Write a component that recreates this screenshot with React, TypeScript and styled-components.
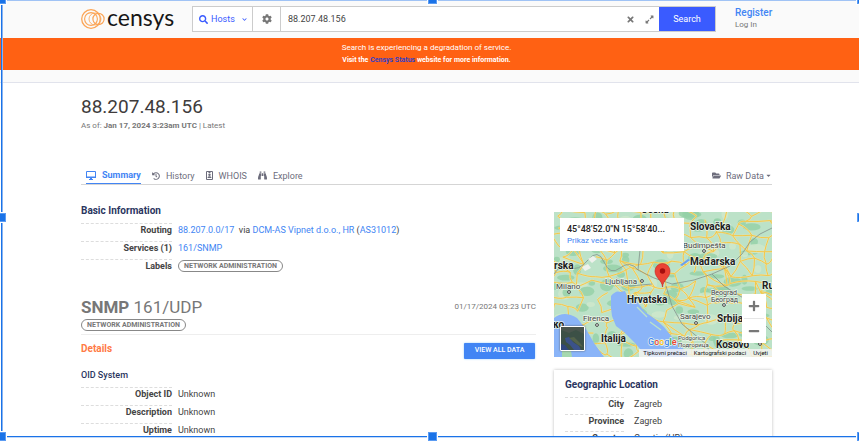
import React from "react";
import styled, { createGlobalStyle, css } from "styled-components";
import {
  FaSearch,
  FaChevronDown,
  FaCog,
  FaTimes,
  FaExpandAlt,
  FaHistory,
  FaBinoculars,
  FaFolderOpen,
  FaCaretDown,
  FaPlus,
  FaMinus,
} from "react-icons/fa";

const color = {
  ink: "#444444",
  muted: "#777777",
  navy: "#2a3560",
  link: "#4285f4",
  brand: "#3a5bff",
  orange: "#ff6113",
  line: "#cccccc",
  frame: "#1a73e8",
};

const GlobalStyle = createGlobalStyle`
  * { box-sizing: border-box; }
  body {
    margin: 0;
    background: #ffffff;
    color: ${color.ink};
    font-family: Roboto, "Liberation Sans", sans-serif;
    font-size: 9px;
    line-height: 12px;
  }
  h1, h2, h3, p, dl, dd, dt { margin: 0; }
  a { color: ${color.link}; text-decoration: none; }
  button, input, select { font: inherit; color: inherit; }
  svg { flex: none; }
`;

const Screen = styled.div`
  position: relative;
  height: 100vh;
  padding-bottom: 8px;
  overflow: hidden;
`;

const Page = styled.div`
  height: 100%;
  overflow: hidden;
`;

const Container = styled.div`
  padding: 0 87px 0 81px;
`;

/* Header */

const Header = styled.header`
  background: #fafafa;
  border-bottom: 1px solid #e1e3ec;
  padding-bottom: 12px;
`;

const TopBar = styled(Container)`
  display: flex;
  align-items: center;
  height: 38px;
`;

const Brand = styled.a`
  display: flex;
  align-items: center;
  flex: none;
  width: 111px;
  gap: 2px;
  color: #161616;
`;

const BrandName = styled.span`
  padding-bottom: 4px;
  font: 400 23px/24px Lato, sans-serif;
`;

const SearchForm = styled.form`
  display: flex;
  flex: 1;
  height: 26px;
  border: 1px solid ${color.line};
  background: #ffffff;
`;

const HostsPicker = styled.label`
  display: flex;
  align-items: center;
  gap: 3px;
  width: 60px;
  padding-left: 6px;
  border-right: 1px solid ${color.line};
  color: ${color.brand};
`;

const HostsSelect = styled.select`
  width: 28px;
  padding: 0;
  border: 0;
  appearance: none;
  background: transparent;
  font-size: 9px;
`;

const IconButton = styled.button<{ $width: number; $divided?: boolean }>`
  display: flex;
  align-items: center;
  justify-content: center;
  width: ${(p) => p.$width}px;
  padding: 0;
  border: 0;
  ${(p) => p.$divided && css`border-right: 1px solid ${color.line};`}
  background: transparent;
  color: ${color.muted};
`;

const SearchInput = styled.input`
  flex: 1;
  min-width: 0;
  padding: 0 7px;
  border: 0;
  background: transparent;
  font-size: 9px;
`;

const SearchButton = styled.button`
  width: 56px;
  border: 0;
  background: ${color.brand};
  color: #ffffff;
  font-size: 9px;
`;

const Account = styled.nav`
  display: flex;
  flex-direction: column;
  flex: none;
  width: 56px;
  padding-left: 19px;
  white-space: nowrap;
`;

const RegisterLink = styled.a`
  font-size: 10px;
  font-weight: 500;
`;

const LoginLink = styled.a`
  color: ${color.muted};
  font-size: 8px;
`;

const Banner = styled.div`
  padding: 3px 0;
  background: ${color.orange};
  color: #ffffff;
  text-align: center;
  line-height: 13px;
`;

const BannerTitle = styled.p`
  font-size: 8px;
`;

const BannerNote = styled.p`
  font-size: 7px;
  font-weight: 700;
  a { color: #3340c4; }
`;

/* Host heading and tabs */

const HostName = styled.h1`
  padding-top: 10px;
  color: #403c3c;
  font-size: 19px;
  font-weight: 400;
  line-height: 27px;
`;

const AsOf = styled.p`
  color: ${color.muted};
  font-size: 8px;
`;

const TabBar = styled.nav`
  display: flex;
  margin-top: 35px;
  border-bottom: 1px solid #d5d5d5;
  color: #6d6d7c;
`;

const Tab = styled.a<{ $active?: boolean }>`
  display: flex;
  align-items: center;
  gap: 6px;
  height: 17px;
  margin: 0 6px 0 5px;
  color: #6d6d7c;
  ${(p) =>
    p.$active &&
    css`
      border-bottom: 1px solid ${color.link};
      color: ${color.link};
      font-weight: 700;
    `}
`;

const RawData = styled.button`
  display: flex;
  align-items: center;
  gap: 1px;
  margin-left: auto;
  padding: 0;
  border: 0;
  background: transparent;
  svg:first-child { margin-right: 4px; }
`;

/* Body */

const Columns = styled.main`
  display: grid;
  grid-template-columns: minmax(0, 1fr) 218px;
  gap: 18px;
  padding-top: 19px;
`;

const SectionTitle = styled.h2`
  color: ${color.navy};
  font-size: 10px;
  font-weight: 700;
  line-height: 14px;
`;

const SubTitle = styled(SectionTitle)`
  margin-top: 9px;
  font-size: 9px;
  font-weight: 500;
`;

const Facts = styled.dl<{ $label: number; $gap: number; $row: number }>`
  display: grid;
  grid-template-columns: ${(p) => p.$label}px minmax(0, 1fr);
  column-gap: ${(p) => p.$gap}px;
  grid-auto-rows: ${(p) => p.$row}px;
  margin-top: 5px;
`;

const FactName = styled.dt`
  border-top: 1px dashed #dddddd;
  text-align: right;
  font-weight: 700;
`;

const FactValue = styled.dd`
  padding-top: 1px;
  white-space: nowrap;
`;

const Label = styled.span`
  display: inline-block;
  padding: 0 5px;
  border: 1px solid #888888;
  border-radius: 6px;
  color: ${color.muted};
  font-size: 7px;
  font-weight: 700;
  line-height: 10px;
  vertical-align: top;
`;

const ServiceHead = styled.div`
  display: flex;
  align-items: center;
  justify-content: space-between;
  margin-top: 19px;
`;

const ServiceTitle = styled.h2`
  color: ${color.muted};
  font-size: 17px;
  font-weight: 400;
  line-height: 22px;
`;

const Stamp = styled.time`
  color: ${color.muted};
  font-size: 8px;
`;

const ServiceLabels = styled.div`
  height: 17px;
  padding-top: 1px;
  border-bottom: 1px solid #eeeeee;
`;

const DetailsRow = styled.div`
  display: flex;
  align-items: center;
  justify-content: space-between;
  padding: 8px 1px 0 0;
`;

const DetailsTitle = styled.h3`
  padding-bottom: 4px;
  color: #ff7a45;
  font-size: 10px;
  font-weight: 700;
`;

const DataButton = styled.button`
  width: 71px;
  height: 16px;
  padding: 0 0 2px;
  border: 0;
  border-radius: 1px;
  background: ${color.link};
  box-shadow: 0 0 2px #8ec8fb;
  color: #ffffff;
  font-size: 7px;
  font-weight: 500;
`;

/* Map */

const MapBox = styled.section`
  position: relative;
  height: 145px;
  margin-top: 8px;
  overflow: hidden;
`;

const MapDrawing = styled.svg`
  display: block;
  width: 100%;
  height: 100%;
`;

const PlaceCard = styled.div`
  position: absolute;
  top: 6px;
  left: 6px;
  width: 124px;
  height: 33px;
  padding: 6px 7px;
  background: #ffffff;
  line-height: 11px;
  white-space: nowrap;
`;

const PlaceName = styled.p`
  color: #222222;
  font-size: 9px;
  font-weight: 500;
`;

const PlaceLink = styled.a`
  display: block;
  font-size: 8px;
`;

const ZoomControls = styled.div`
  position: absolute;
  top: 82px;
  right: 6px;
  width: 24px;
  height: 49px;
  padding: 0 2px;
  background: #ffffff;
  button { height: 24px; }
  button + button { border-top: 1px solid #e6e6e6; }
`;

const LayerButton = styled.button`
  position: absolute;
  bottom: 6px;
  left: 6px;
  width: 25px;
  height: 25px;
  padding: 0;
  border: 1px solid #ffffff;
  border-radius: 1px;
  box-shadow: 0 0 2px #555555;
  svg { display: block; }
`;

const MapFooter = styled.div`
  position: absolute;
  right: 0;
  bottom: 0;
  display: flex;
  gap: 7px;
  padding: 0 4px;
  background: rgba(245, 245, 245, 0.8);
  font-size: 6px;
  line-height: 8px;
  white-space: nowrap;
  a, button { padding: 0; border: 0; background: transparent; color: #111111; }
`;

const GeoCard = styled.section`
  margin-top: 13px;
  height: 120px;
  padding: 8px 11px;
  background: #ffffff;
  box-shadow: 0 0 3px #bdbdbd;
`;

/* Resize frame laid over the page */

const Frame = styled.div`
  position: absolute;
  top: 0;
  right: 0;
  bottom: 7px;
  left: 1px;
  border: solid ${color.frame};
  border-width: 0 0 1px 1px;
  box-shadow: inset 1px 0 #8ab4f0, 0 1px #c3d9f8, inset 0 1px #a0c3f5;
  pointer-events: none;
`;

const Handle = styled.span<{ $x: "left" | "mid" | "right"; $y: "top" | "mid" | "bottom" }>`
  position: absolute;
  width: 9px;
  height: 9px;
  border: 1px solid #5b9bf2;
  outline: 1px solid #ffffff;
  background: ${color.frame};
  ${(p) => p.$x === "left" && css`left: -5px;`}
  ${(p) => p.$x === "mid" && css`left: calc(50% - 3px);`}
  ${(p) => p.$x === "right" && css`right: -7px;`}
  ${(p) => p.$y === "top" && css`top: -5px;`}
  ${(p) => p.$y === "mid" && css`top: calc(50% - 5px);`}
  ${(p) => p.$y === "bottom" && css`bottom: -5px;`}
`;

const Rings = () => (
  <svg width="24" height="22" viewBox="0 0 24 22" fill="none" stroke="#fba557" aria-hidden="true">
    <circle cx="10" cy="11" r="9.3" strokeWidth="1.3" />
    <circle cx="10" cy="11" r="6.4" strokeWidth="1.1" />
    <circle cx="14" cy="11" r="6" strokeWidth="1" opacity="0.8" />
    <circle cx="17.500" cy="11" r="5.600" strokeWidth="1.200" />
  </svg>
);

const MonitorIcon = () => (
  <svg width="10" height="9" viewBox="0 0 10 9" aria-hidden="true">
    <path d="M.5.5h9v6h-9z" fill="none" stroke="currentColor" />
    <path d="M0 5.500h10v1.500H0zM4 7h2v1h1v1H3V8h1z" fill="currentColor" />
  </svg>
);

const BadgeIcon = () => (
  <svg width="7" height="9" viewBox="0 0 7 9" aria-hidden="true">
    <path d="M.5.5h6v8h-6z" fill="none" stroke="currentColor" />
    <circle cx="3.500" cy="3.700" r="1.200" fill="currentColor" />
    <path d="M1.500 7c0-2.200 4-2.200 4 0zM2.500 1h2v1h-2z" fill="currentColor" />
  </svg>
);

function noise(n: number) {
  const v = Math.sin(n * 127.1 + 311.7) * 43758.5453;
  return v - Math.floor(v);
}

type Point = [number, number];

function roadNode(col: number, row: number): Point {
  const seed = col * 17 + row * 59;
  return [col * 14 - 6 + noise(seed) * 12, row * 12 - 5 + noise(seed + 7) * 10];
}

function buildRoads() {
  const parts: string[] = [];
  const join = (a: Point, b: Point, s: number) => {
    const mx = (a[0] + b[0]) / 2 + (noise(s) - 0.5) * 7;
    const my = (a[1] + b[1]) / 2 + (noise(s + 3) - 0.5) * 7;
    parts.push(`M${a[0].toFixed(1)} ${a[1].toFixed(1)}Q${mx.toFixed(1)} ${my.toFixed(1)} ${b[0].toFixed(1)} ${b[1].toFixed(1)}`);
  };
  for (let c = 0; c < 17; c++) {
    for (let r = 0; r < 14; r++) {
      const s = c * 31 + r * 13;
      if (noise(s) > 0.2) join(roadNode(c, r), roadNode(c + 1, r), s);
      if (noise(s + 1) > 0.3) join(roadNode(c, r), roadNode(c, r + 1), s + 5);
      if (noise(s + 2) > 0.8) join(roadNode(c, r), roadNode(c + 1, r + 1), s + 9);
    }
  }
  return parts.join("");
}

const roads = buildRoads();

const forests = Array.from({ length: 110 }, (_, i) => ({
  cx: noise(i * 3 + 1) * 218,
  cy: noise(i * 5 + 2) * 145,
  rx: 3 + noise(i * 7) * 7,
  ry: 2 + noise(i * 11) * 4,
}));

const countries = [
  { x: 136, y: 18, name: "Slovačka" },
  { x: 136, y: 53, name: "Mađarska" },
  { x: 0, y: 57, name: "rska" },
  { x: 73, y: 91, name: "Hrvatska" },
  { x: 163, y: 110, name: "Srbija" },
  { x: 47, y: 130, name: "Italija" },
  { x: 162, y: 136, name: "Kosovo" },
  { x: 208, y: 77, name: "Ru" },
  { x: 87, y: 1, name: "Češka" },
  { x: -1, y: 116, name: "ко" },
];

const cities = [
  { x: 129, y: 36, name: "Budimpešta", size: 8 },
  { x: 2, y: 77, name: "Milano", size: 8 },
  { x: 51, y: 72, name: "Ljubljana", size: 8 },
  { x: 29, y: 109, name: "Firenca", size: 8 },
  { x: 126, y: 107, name: "Sarajevo", size: 8 },
  { x: 157, y: 83, name: "Beograd", size: 7 },
  { x: 157, y: 90, name: "Београд", size: 7 },
  { x: 124, y: 128, name: "Podgorica", size: 6 },
  { x: 124, y: 135, name: "Подгорица", size: 6 },
];

const townDots: Point[] = [[15, 80], [88, 69], [43, 113], [142, 111], [170, 93], [150, 39], [206, 132]];

const googleLetters = [
  ["G", "#4285f4"],
  ["o", "#ea4335"],
  ["o", "#fbbc05"],
  ["g", "#4285f4"],
  ["l", "#34a853"],
  ["e", "#ea4335"],
];

const EuropeMap = () => (
  <MapDrawing viewBox="0 0 218 145" preserveAspectRatio="xMidYMid slice" role="img" aria-label="Zagreb">
    <rect width="218" height="145" fill="#bce2c8" />
    {forests.map((f, i) => (
      <ellipse key={i} {...f} fill={i % 4 ? "#93d1a6" : "#d0e8cc"} opacity="0.8" />
    ))}
    <path d={roads} fill="none" stroke="#f5e6a8" strokeWidth="2" opacity="0.6" />
    <path d={roads} fill="none" stroke="#f4c84a" strokeWidth="1" />
    <path
      d="M0 62Q8 50 16 55T34 48T50 50T66 56T84 58L100 66L118 72L140 68L158 62L176 54L188 42L196 30L206 22L218 16M84 58L86 38L100 24L118 20M112 74L118 94L128 112L140 122L152 132L158 145M158 62L170 74L186 84L200 92L210 112L218 120M62 66L76 74L98 72"
      fill="none"
      stroke="#84938c"
      strokeWidth="0.800"
    />
    <path d="M34 47L39 44L43 47L38 51ZM28 55L34 52L37 56L31 59Z" fill="#eef1ec" />
    <path
      d="M57 84Q62 78 66 80L71 79L74 86L79 83L84 91L91 100L101 107L110 115L118 125L127 133L134 145H94L87 138L80 130L70 120L62 114L58 104L57 96Z"
      fill="#8ab4f8"
    />
    <path d="M0 106Q10 98 23 106L32 117L40 131L50 145H0Z" fill="#8ab4f8" />
    <path d="M8 132L15 128L18 145H8Z" fill="#a5d8af" />
    <path d="M83 95L93 105M86 92L97 103M96 110L107 118" stroke="#bce2c8" strokeWidth="1.400" fill="none" />
    <path d="M126 53L134 47L136 48L128 54Z" fill="#6a9ff0" />
    <g fill="#ffffff" stroke="#333333" strokeWidth="0.900">
      {townDots.map(([x, y]) => (
        <circle key={x} cx={x} cy={y} r="1.400" />
      ))}
    </g>
    <g fontFamily="Roboto, sans-serif" stroke="#eaf5ea" strokeWidth="1.400" paintOrder="stroke" strokeLinejoin="round">
      {cities.map((c) => (
        <text key={c.name} x={c.x} y={c.y} fontSize={c.size} fill="#444444">
          {c.name}
        </text>
      ))}
      {countries.map((c) => (
        <text key={c.name} x={c.x} y={c.y} fontSize="10" fontWeight="700" fill="#202020">
          {c.name}
        </text>
      ))}
      <text x="94" y="133" fontSize="9" fontWeight="500">
        {googleLetters.map(([ch, fill], i) => (
          <tspan key={i} fill={fill}>
            {ch}
          </tspan>
        ))}
      </text>
    </g>
    <path d="M108.500 75C108 68 101 66 101 59a7.500 7.500 0 0 1 15 0C116 66 109 68 108.500 75Z" fill="#ea4335" stroke="#c5221f" strokeWidth="0.600" />
    <circle cx="108.500" cy="59" r="2.700" fill="#a50e0e" />
  </MapDrawing>
);

const SatelliteThumb = () => (
  <svg width="23" height="23" viewBox="0 0 23 23" aria-hidden="true">
    <rect width="23" height="23" fill="#3c5046" />
    <path d="M0 3L8 6L15 3L23 7V0H0Z" fill="#4a554e" />
    <path d="M4 11L8 10L12 15L18 19L20 23H13L9 18L5 15Z" fill="#3b528a" />
    <path d="M0 17L4 18L8 23H0Z" fill="#31477c" />
    <path d="M8 11L13 10L19 16L22 20L17 18L12 14Z" fill="#54634b" />
  </svg>
);

export default function App() {
  return (
    <>
      <GlobalStyle />
      <Screen>
        <Page>
          <Header>
            <TopBar>
              <Brand href="#">
                <Rings />
                <BrandName>censys</BrandName>
              </Brand>
              <SearchForm onSubmit={(e) => e.preventDefault()}>
                <HostsPicker>
                  <FaSearch size={9} />
                  <HostsSelect aria-label="Search index" defaultValue="Hosts">
                    <option>Hosts</option>
                  </HostsSelect>
                  <FaChevronDown size={5} />
                </HostsPicker>
                <IconButton type="button" $width={28} $divided aria-label="Settings">
                  <FaCog size={10} />
                </IconButton>
                <SearchInput aria-label="Search" defaultValue="88.207.48.156" />
                <IconButton type="button" $width={17} aria-label="Clear">
                  <FaTimes size={9} />
                </IconButton>
                <IconButton type="button" $width={20} aria-label="Expand">
                  <FaExpandAlt size={9} />
                </IconButton>
                <SearchButton type="submit">Search</SearchButton>
              </SearchForm>
              <Account>
                <RegisterLink href="#">Register</RegisterLink>
                <LoginLink href="#">Log In</LoginLink>
              </Account>
            </TopBar>
            <Banner>
              <Container>
                <BannerTitle>Search is experiencing a degradation of service.</BannerTitle>
                <BannerNote>
                  Visit the <a href="#">Censys Status</a> website for more information.
                </BannerNote>
              </Container>
            </Banner>
          </Header>

          <Container>
            <HostName>88.207.48.156</HostName>
            <AsOf>
              As of: <b>Jan 17, 2024 3:23am UTC</b> | Latest
            </AsOf>
            <TabBar>
              <Tab href="#" $active>
                <MonitorIcon />
                Summary
              </Tab>
              <Tab href="#">
                <FaHistory size={8} />
                History
              </Tab>
              <Tab href="#">
                <BadgeIcon />
                WHOIS
              </Tab>
              <Tab href="#">
                <FaBinoculars size={9} />
                Explore
              </Tab>
              <RawData type="button">
                <FaFolderOpen size={9} />
                Raw Data
                <FaCaretDown size={7} />
              </RawData>
            </TabBar>

            <Columns>
              <div>
                <SectionTitle>Basic Information</SectionTitle>
                <Facts $label={91} $gap={6} $row={18}>
                  <FactName>Routing</FactName>
                  <FactValue>
                    <a href="#">88.207.0.0/17</a>&nbsp; via <a href="#">DCM-AS Vipnet d.o.o., HR</a> (<a href="#">AS31012</a>)
                  </FactValue>
                  <FactName>Services (1)</FactName>
                  <FactValue>
                    <a href="#">161/SNMP</a>
                  </FactValue>
                  <FactName>Labels</FactName>
                  <FactValue>
                    <Label>NETWORK ADMINISTRATION</Label>
                  </FactValue>
                </Facts>

                <ServiceHead>
                  <ServiceTitle>
                    <b>SNMP</b> 161/UDP
                  </ServiceTitle>
                  <Stamp>01/17/2024 03:23 UTC</Stamp>
                </ServiceHead>
                <ServiceLabels>
                  <Label>NETWORK ADMINISTRATION</Label>
                </ServiceLabels>
                <DetailsRow>
                  <DetailsTitle>Details</DetailsTitle>
                  <DataButton type="button">VIEW ALL DATA</DataButton>
                </DetailsRow>
                <SubTitle as="h3">OID System</SubTitle>
                <Facts $label={91} $gap={6} $row={18}>
                  <FactName>Object ID</FactName>
                  <FactValue>Unknown</FactValue>
                  <FactName>Description</FactName>
                  <FactValue>Unknown</FactValue>
                  <FactName>Uptime</FactName>
                  <FactValue>Unknown</FactValue>
                </Facts>
              </div>

              <aside>
                <MapBox>
                  <EuropeMap />
                  <PlaceCard>
                    <PlaceName>45°48'52.0"N 15°58'40...</PlaceName>
                    <PlaceLink href="#">Prikaz veće karte</PlaceLink>
                  </PlaceCard>
                  <ZoomControls>
                    <IconButton type="button" $width={20} aria-label="Zoom in">
                      <FaPlus size={12} />
                    </IconButton>
                    <IconButton type="button" $width={20} aria-label="Zoom out">
                      <FaMinus size={12} />
                    </IconButton>
                  </ZoomControls>
                  <LayerButton type="button" aria-label="Satellite view">
                    <SatelliteThumb />
                  </LayerButton>
                  <MapFooter>
                    <button type="button">Tipkovni prečaci</button>
                    <button type="button">Kartografski podaci</button>
                    <a href="#">Uvjeti</a>
                  </MapFooter>
                </MapBox>
                <GeoCard>
                  <SectionTitle>Geographic Location</SectionTitle>
                  <Facts $label={59} $gap={10} $row={17}>
                    <FactName>City</FactName>
                    <FactValue>Zagreb</FactValue>
                    <FactName>Province</FactName>
                    <FactValue>Zagreb</FactValue>
                    <FactName>Country</FactName>
                    <FactValue>Croatia (HR)</FactValue>
                  </Facts>
                </GeoCard>
              </aside>
            </Columns>
          </Container>
        </Page>
        <Frame>
          <Handle $x="left" $y="top" />
          <Handle $x="mid" $y="top" />
          <Handle $x="right" $y="top" />
          <Handle $x="left" $y="mid" />
          <Handle $x="right" $y="mid" />
          <Handle $x="left" $y="bottom" />
          <Handle $x="mid" $y="bottom" />
          <Handle $x="right" $y="bottom" />
        </Frame>
      </Screen>
    </>
  );
}
